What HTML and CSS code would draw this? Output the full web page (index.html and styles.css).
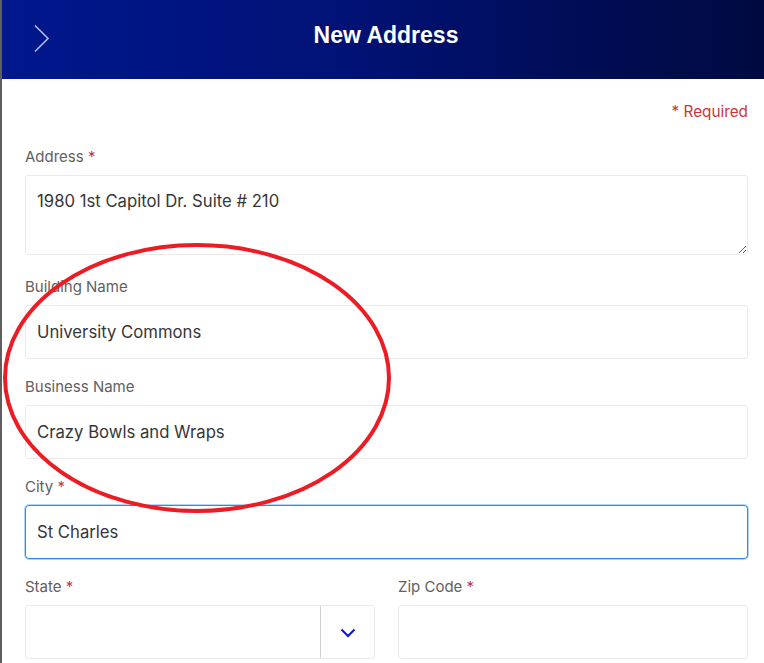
FILE: index.html
```html
<!DOCTYPE html>
<html lang="en">
<head>
    <meta charset="UTF-8">
    <meta name="viewport" content="width=device-width, initial-scale=1.0">
    <title>New Address</title>
    <link rel="stylesheet" href="styles.css">
</head>
<body>

    <div class="panel">
        <header class="header">
            <button class="back" aria-label="Back">
                <svg width="18" height="30" viewBox="0 0 18 30">
                    <polyline points="2,1.5 15,14.5 2,27.5" fill="none" stroke="#b4b8f2" stroke-width="1.6"/>
                </svg>
            </button>
            <h1 class="title">New Address</h1>
        </header>

        <form class="form">
            <div class="required-note">* Required</div>

            <div class="field field-tall">
                <label class="label">Address <span class="star">*</span></label>
                <textarea class="control textarea">1980 1st Capitol Dr. Suite # 210</textarea>
            </div>

            <div class="field">
                <label class="label">Building Name</label>
                <input class="control" type="text" value="University Commons">
            </div>

            <div class="field">
                <label class="label">Business Name</label>
                <input class="control" type="text" value="Crazy Bowls and Wraps">
            </div>

            <div class="field">
                <label class="label">City <span class="star">*</span></label>
                <input class="control focused" type="text" value="St Charles">
            </div>

            <div class="row">
                <div class="field">
                    <label class="label">State <span class="star">*</span></label>
                    <div class="control select">
                        <span class="select-value"></span>
                        <span class="select-arrow">
                            <svg width="16" height="10" viewBox="0 0 16 10">
                                <polyline points="1.5,1.5 8,8 14.5,1.5" fill="none" stroke="#0a14d8" stroke-width="2"/>
                            </svg>
                        </span>
                    </div>
                </div>
                <div class="field">
                    <label class="label">Zip Code <span class="star">*</span></label>
                    <input class="control" type="text" value="">
                </div>
            </div>
        </form>

        <!-- hand-drawn annotation -->
        <svg class="annotation" width="400" height="280" viewBox="0 0 400 280">
            <ellipse cx="195" cy="135" rx="192" ry="133" fill="none" stroke="#ed1c24" stroke-width="4"/>
        </svg>
    </div>

</body>
</html>
```

FILE: styles.css
```css
body {
    margin: 0;
    font-family: Inter, "Noto Sans", sans-serif;
    background-color: #fff;
    border-left: 2px solid #5f5f5f;
    min-height: 100vh;
    box-sizing: border-box;
    overflow: hidden;
}

.panel {
    position: relative;
}

.header {
    height: 79px;
    display: flex;
    align-items: center;
    justify-content: center;
    position: relative;
    background: linear-gradient(90deg, #00178e 0%, #001275 45%, #000c52 80%, #000a40 100%);
}

.back {
    position: absolute;
    left: 31px;
    top: 24px;
    padding: 0;
    background: none;
    border: none;
    cursor: pointer;
}

.title {
    margin: 0;
    color: #fff;
    font-family: "Liberation Sans", Arial, sans-serif;
    font-size: 23px;
    font-weight: 700;
    padding: 0 0 9px 6px;
}

.form {
    padding: 23px 16px 0 23px;
}

.required-note {
    text-align: right;
    color: #d13438;
    font-size: 15.3px;
    line-height: 20px;
    margin-bottom: 25px;
}

.field {
    margin-bottom: 18px;
}

.field-tall {
    margin-bottom: 22px;
}

.label {
    display: block;
    font-size: 15px;
    line-height: 20px;
    color: #616161;
    margin-bottom: 8px;
}

.star {
    color: #c4314b;
}

.control {
    display: block;
    width: 100%;
    box-sizing: border-box;
    height: 54px;
    padding: 0 11px;
    border: 1px solid #ebebeb;
    border-radius: 3px;
    font-family: Inter, "Noto Sans", sans-serif;
    font-size: 16.7px;
    color: #363636;
    background: #fff;
    outline: none;
}

.textarea {
    height: 80px;
    padding: 13px 11px;
    line-height: 24px;
    resize: vertical;
}

.focused {
    border-color: #2f8be0;
    box-shadow: 0 0 0 1px rgba(47, 139, 224, 0.35);
    border-radius: 4px;
}

.row {
    display: grid;
    grid-template-columns: 1fr 1fr;
    gap: 23px;
}

.select {
    display: flex;
    padding: 0;
}

.select-value {
    flex: 1;
}

.select-arrow {
    width: 53px;
    display: flex;
    align-items: center;
    justify-content: center;
    border-left: 1px solid #cfcfcf;
    padding-top: 2px;
}

.annotation {
    position: absolute;
    left: 0;
    top: 243px;
    pointer-events: none;
}
```
